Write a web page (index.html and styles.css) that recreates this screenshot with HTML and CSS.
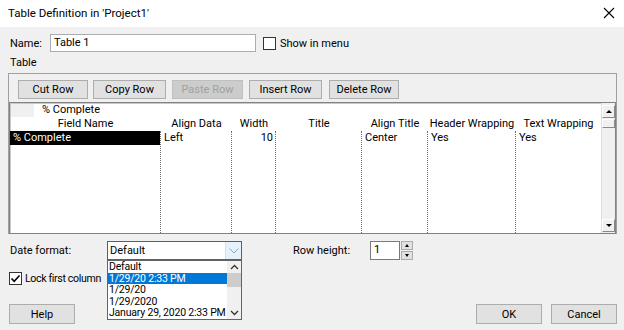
FILE: index.html
```html
<!DOCTYPE html>
<html lang="en">

<head>
    <meta charset="UTF-8">
    <title>Table Definition</title>
    <link rel="stylesheet" href="styles.css">
</head>

<body>
    <div class="dialog">
        <div class="titlebar">
            <span>Table Definition in 'Project1'</span>
            <svg class="close" width="12" height="12" viewBox="0 0 12 12">
                <path d="M1 1 L11 11 M11 1 L1 11" stroke="#000" stroke-width="1.1" fill="none" />
            </svg>
        </div>

        <div class="content">
            <div class="name-row">
                <span class="name-label">Name:</span>
                <div class="textbox name-box">Table 1</div>
                <span class="checkbox"></span>
                <span>Show in menu</span>
            </div>
            <div class="section-label">Table</div>

            <div class="group">
                <div class="toolbar">
                    <div class="btn tb-btn">Cut Row</div>
                    <div class="btn tb-btn">Copy Row</div>
                    <div class="btn tb-btn disabled">Paste Row</div>
                    <div class="btn tb-btn">Insert Row</div>
                    <div class="btn tb-btn">Delete Row</div>
                </div>

                <div class="grid">
                    <div class="grid-main">
                        <div class="edit-row">
                            <span class="edit-stub"></span>
                            <span>% Complete</span>
                        </div>
                        <div class="cols">
                            <div class="col" style="width: 151px">
                                <div class="head">Field Name</div>
                                <div class="col-body"><div class="cell selected">% Complete</div></div>
                            </div>
                            <div class="col" style="width: 71px">
                                <div class="head">Align Data</div>
                                <div class="col-body"><div class="cell">Left</div></div>
                            </div>
                            <div class="col" style="width: 44px">
                                <div class="head">Width</div>
                                <div class="col-body"><div class="cell num">10</div></div>
                            </div>
                            <div class="col" style="width: 86px">
                                <div class="head">Title</div>
                                <div class="col-body"><div class="cell"></div></div>
                            </div>
                            <div class="col" style="width: 66px">
                                <div class="head">Align Title</div>
                                <div class="col-body"><div class="cell">Center</div></div>
                            </div>
                            <div class="col" style="width: 88px">
                                <div class="head">Header Wrapping</div>
                                <div class="col-body"><div class="cell">Yes</div></div>
                            </div>
                            <div class="col last">
                                <div class="head">Text Wrapping</div>
                                <div class="col-body"><div class="cell">Yes</div></div>
                            </div>
                        </div>
                    </div>
                    <div class="vscroll">
                        <div class="sb-btn"><span class="tri-up"></span></div>
                        <div class="sb-thumb"></div>
                        <div class="sb-track"></div>
                        <div class="sb-btn"><span class="tri-down"></span></div>
                    </div>
                </div>
            </div>

            <div class="bottom">
                <div class="row">
                    <span class="date-label">Date format:</span>
                    <div class="combo">
                        <span class="combo-text">Default</span>
                        <span class="combo-arrow">
                            <svg width="10" height="6" viewBox="0 0 10 6">
                                <path d="M0.5 0.5 L5 5 L9.5 0.5" stroke="#a0a0a0" fill="none" />
                            </svg>
                        </span>
                        <div class="dropdown">
                            <div class="dd-items">
                                <div class="dd-item">Default</div>
                                <div class="dd-item active">1/29/20 2:33 PM</div>
                                <div class="dd-item">1/29/20</div>
                                <div class="dd-item">1/29/2020</div>
                                <div class="dd-item">January 29, 2020 2:33 PM</div>
                            </div>
                            <div class="dd-scroll">
                                <svg width="9" height="6" viewBox="0 0 9 6">
                                    <path d="M1 5 L4.5 1.5 L8 5" stroke="#333" stroke-width="1.3" fill="none" />
                                </svg>
                                <div class="dd-thumb"></div>
                                <div class="dd-fill"></div>
                                <svg width="9" height="6" viewBox="0 0 9 6">
                                    <path d="M1 1 L4.5 4.5 L8 1" stroke="#333" stroke-width="1.3" fill="none" />
                                </svg>
                            </div>
                        </div>
                    </div>
                    <span class="rh-label">Row height:</span>
                    <div class="textbox spin-box">1</div>
                    <div class="spin">
                        <div class="spin-btn"><span class="tri-up small"></span></div>
                        <div class="spin-btn"><span class="tri-down small"></span></div>
                    </div>
                </div>
                <div class="lock-row">
                    <span class="checkbox checked">
                        <svg width="11" height="11" viewBox="0 0 11 11">
                            <path d="M1.5 5.5 L4.2 8.3 L9.5 2.5" stroke="#000" stroke-width="1.6" fill="none" />
                        </svg>
                    </span>
                    <span class="lock-label">Lock first column</span>
                </div>
                <div class="footer">
                    <div class="btn dlg-btn">Help</div>
                    <div class="spacer"></div>
                    <div class="btn dlg-btn">OK</div>
                    <div class="btn dlg-btn">Cancel</div>
                </div>
            </div>
        </div>
    </div>
</body>

</html>
```

FILE: styles.css
```css
* {
    margin: 0;
    padding: 0;
    box-sizing: border-box;
}

body {
    width: 624px;
    height: 330px;
    overflow: hidden;
    font-family: Roboto, "Noto Sans", sans-serif;
    font-size: 11px;
    color: #000;
    background-color: #f0f0f0;
}

.dialog {
    width: 624px;
    height: 330px;
}

.titlebar {
    height: 27px;
    background-color: #fff;
    display: flex;
    align-items: center;
    justify-content: space-between;
    padding: 0 8px 1px 8px;
    font-size: 11.5px;
}

.close {
    margin-right: 1px;
}

.content {
    padding: 0 7px 0 8px;
}

/* name row */
.name-row {
    display: flex;
    align-items: center;
    height: 18px;
    margin-top: 7px;
}

.name-label {
    width: 42px;
    padding-left: 2px;
}

.textbox {
    background-color: #fff;
    border: 1px solid #7a7a7a;
    height: 18px;
    line-height: 15px;
    padding-left: 3px;
}

.name-box {
    width: 206px;
    border-color: #abadb3;
}

.checkbox {
    width: 13px;
    height: 13px;
    border: 1px solid #333;
    background-color: #fff;
    margin: 0 4px 0 7px;
    display: flex;
    align-items: center;
    justify-content: center;
}

.section-label {
    padding-left: 2px;
    margin-top: 4px;
    height: 14px;
    line-height: 14px;
}

/* table group */
.group {
    margin-top: 3px;
    width: 609px;
    border: 1px solid #a0a0a0;
    border-bottom: none;
    padding-top: 6px;
}

.toolbar {
    display: flex;
    padding-left: 9px;
}

.btn {
    background-color: #e1e1e1;
    border: 1px solid #adadad;
    display: flex;
    align-items: center;
    justify-content: center;
}

.tb-btn {
    height: 19px;
    margin-right: 6px;
}

.tb-btn:nth-child(1) { width: 70px; margin-right: 5px; }
.tb-btn:nth-child(2) { width: 73px; }
.tb-btn:nth-child(3) { width: 71px; }
.tb-btn:nth-child(4) { width: 73px; margin-right: 7px; }
.tb-btn:nth-child(5) { width: 70px; }

.tb-btn.disabled {
    color: #a0a0a0;
    background-color: #cccccc;
    border-color: #bfbfbf;
}

.grid {
    margin-top: 3px;
    height: 132px;
    display: flex;
    background-color: #fff;
    border: 1px solid #828282;
    box-shadow: inset 1px 1px 0 #c9c9c9;
}

.grid-main {
    flex: 1;
    display: flex;
    flex-direction: column;
}

.edit-row {
    height: 14px;
    display: flex;
    align-items: center;
    line-height: 14px;
}

.edit-stub {
    width: 23px;
    height: 13px;
    background-color: #f0f0f0;
    margin: 0 8px 0 1px;
}

.cols {
    flex: 1;
    display: flex;
}

.col {
    display: flex;
    flex-direction: column;
}

.col.last {
    flex: 1;
}

.head {
    height: 14px;
    line-height: 14px;
    text-align: center;
    white-space: nowrap;
}

.col-body {
    flex: 1;
    border-right: 1px dotted #6e6e6e;
    padding-bottom: 2px;
}

.col.last .col-body {
    border-right: none;
}

.cell {
    height: 14px;
    line-height: 14px;
    padding-left: 3px;
    white-space: nowrap;
}

.cell.num {
    text-align: right;
    padding-right: 2px;
}

.cell.selected {
    background-color: #000;
    color: #fff;
}

/* grid scrollbar */
.vscroll {
    width: 14px;
    display: flex;
    flex-direction: column;
    background-color: #f0f0f0;
    border-left: 1px solid #e0e0e0;
}

.sb-btn {
    height: 13px;
    background-color: #f0f0f0;
    border: 1px solid;
    border-color: #fff #8a8a8a #8a8a8a #fff;
    display: flex;
    align-items: center;
    justify-content: center;
    margin-top: 2px;
}

.sb-btn:last-child {
    margin-top: 0;
    margin-bottom: 1px;
}

.sb-thumb {
    height: 9px;
    margin-top: 1px;
    border: 1px solid;
    border-color: #fff #8a8a8a #8a8a8a #fff;
}

.sb-track {
    flex: 1;
}

.tri-up {
    width: 0;
    height: 0;
    border-left: 3px solid transparent;
    border-right: 3px solid transparent;
    border-bottom: 3px solid #000;
}

.tri-down {
    width: 0;
    height: 0;
    border-left: 3px solid transparent;
    border-right: 3px solid transparent;
    border-top: 3px solid #000;
}

.tri-up.small,
.tri-down.small {
    border-left-width: 2.5px;
    border-right-width: 2.5px;
}

/* bottom controls */
.bottom {
    padding-top: 7px;
}

.row {
    display: flex;
    align-items: center;
    height: 19px;
}

.date-label {
    width: 99px;
    padding-left: 2px;
}

.combo {
    position: relative;
    width: 135px;
    height: 19px;
    border: 1px solid #0078d7;
    background-color: #fff;
    display: flex;
}

.combo-text {
    flex: 1;
    padding-left: 2px;
    line-height: 17px;
}

.combo-arrow {
    width: 16px;
    border-left: 1px solid #cce4f7;
    background-color: #e5f1fb;
    display: flex;
    align-items: center;
    justify-content: center;
}

.dropdown {
    position: absolute;
    left: -1px;
    top: 18px;
    width: 135px;
    height: 60px;
    border: 1px solid #646464;
    background-color: #fff;
    display: flex;
    overflow: hidden;
    z-index: 2;
}

.dd-items {
    flex: 1;
    min-width: 0;
}

.dd-item {
    height: 11.6px;
    line-height: 11.6px;
    padding-left: 1px;
    font-size: 10.5px;
    letter-spacing: -0.2px;
    white-space: nowrap;
    overflow: hidden;
}

.dd-item.active {
    background-color: #0078d7;
    color: #fff;
}

.dd-scroll {
    width: 14px;
    flex-shrink: 0;
    background-color: #f0f0f0;
    display: flex;
    flex-direction: column;
    align-items: center;
    padding: 3px 0 3px 0;
}

.dd-thumb {
    width: 14px;
    height: 14px;
    margin-top: 3px;
    background-color: #cdcdcd;
}

.dd-fill {
    flex: 1;
}

.rh-label {
    margin-left: 51px;
    width: 77px;
}

.spin-box {
    width: 30px;
    height: 19px;
    border-color: #7a7a7a;
    line-height: 15px;
}

.spin {
    margin-left: 1px;
    display: flex;
    flex-direction: column;
    gap: 1px;
}

.spin-btn {
    width: 12px;
    height: 9px;
    border: 1px solid #adadad;
    background-color: #e1e1e1;
    display: flex;
    align-items: center;
    justify-content: center;
}

.lock-row {
    display: flex;
    align-items: center;
    margin-top: 11px;
    height: 14px;
}

.lock-row .checkbox {
    margin: 0 3px 0 1px;
}

.lock-label {
    font-size: 10.6px;
    letter-spacing: -0.35px;
}

.footer {
    display: flex;
    margin-top: 19px;
    padding-left: 1px;
}

.dlg-btn {
    width: 66px;
    height: 20px;
    margin-right: 9px;
}

.dlg-btn:last-child {
    margin-right: 0;
}

.spacer {
    flex: 1;
}
```
